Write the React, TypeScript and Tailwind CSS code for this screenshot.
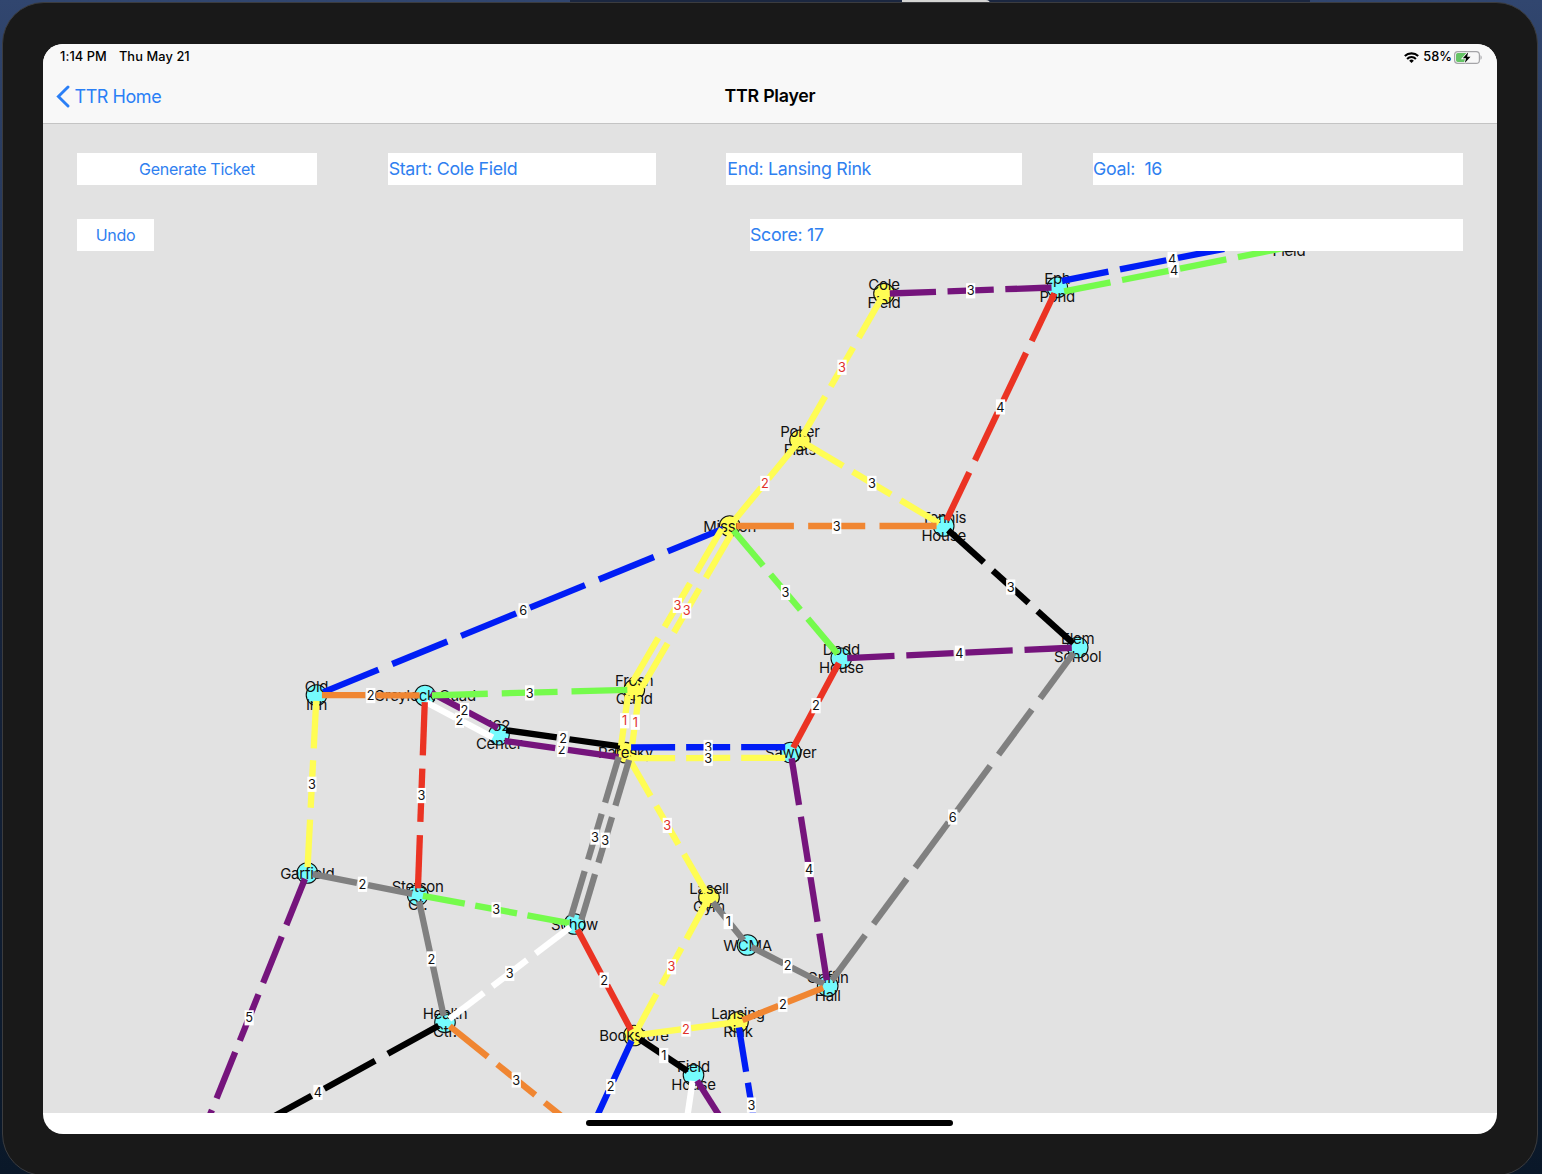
import React from "react";

type Stop = { x: number; y: number; label: string[]; visited?: boolean };

const STOPS: Record<string, Stop> = {
  weston: { x: 1289, y: 241.5, label: ["Weston", "Field"] },
  cole: { x: 884, y: 293.7, label: ["Cole", "Field"], visited: true },
  eph: { x: 1057.3, y: 287.3, label: ["Eph", "Pond"] },
  poker: { x: 800, y: 440.3, label: ["Poker", "Flats"], visited: true },
  mission: { x: 729.7, y: 526, label: ["Mission"], visited: true },
  tennis: { x: 943.7, y: 526, label: ["Tennis", "House"] },
  elem: { x: 1077.7, y: 647.5, label: ["Elem", "School"] },
  dodd: { x: 841.3, y: 658.3, label: ["Dodd", "House"] },
  frosh: { x: 634.3, y: 689.7, label: ["Frosh", "Quad"], visited: true },
  oldInn: { x: 316.5, y: 695, label: ["Old", "Inn"] },
  greylock: { x: 425, y: 695.5, label: ["Greylock Quad"] },
  center: { x: 499, y: 734.7, label: ["'62", "Center"] },
  paresky: { x: 625.6, y: 752.7, label: ["Paresky"], visited: true },
  sawyer: { x: 790.7, y: 752.5, label: ["Sawyer"] },
  garfield: { x: 307.3, y: 873, label: ["Garfield"] },
  stetson: { x: 417.7, y: 895, label: ["Stetson", "Ct."] },
  schow: { x: 574.5, y: 924, label: ["Schow"] },
  lasell: { x: 709, y: 897.5, label: ["Lasell", "Gym"], visited: true },
  wcma: { x: 747.5, y: 945, label: ["WCMA"] },
  griffin: { x: 827.7, y: 986, label: ["Griffin", "Hall"] },
  lansing: { x: 738, y: 1022, label: ["Lansing", "Rink"], visited: true },
  bookstore: { x: 634, y: 1035.5, label: ["Bookstore"], visited: true },
  health: { x: 445, y: 1022.3, label: ["Health", "Ctr."] },
  fieldHouse: { x: 693.5, y: 1075, label: ["Field", "House"] },
  southWest: { x: 191, y: 1162, label: [] },
  south: { x: 587.5, y: 1137, label: [] },
  southMid: { x: 676, y: 1193, label: [] },
  southEast: { x: 765, y: 1187.5, label: [] },
};

const C = {
  red: "#eb3323",
  blue: "#001df5",
  green: "#75fb4c",
  yellow: "#fffd54",
  purple: "#75147c",
  orange: "#f08632",
  gray: "#808080",
  black: "#000000",
  white: "#ffffff",
};

const MAP_BOTTOM = 1113;

type Route = [from: string, to: string, n: number, color: keyof typeof C, shift?: number, taken?: boolean];

const ROUTES: Route[] = [
  ["weston", "eph", 4, "blue", 5.4],
  ["weston", "eph", 4, "green", -5.4],
  ["cole", "eph", 3, "purple"],
  ["cole", "poker", 3, "yellow", 0, true],
  ["eph", "tennis", 4, "red"],
  ["poker", "mission", 2, "yellow", 0, true],
  ["poker", "tennis", 3, "yellow"],
  ["mission", "tennis", 3, "orange"],
  ["mission", "oldInn", 6, "blue"],
  ["mission", "frosh", 3, "yellow", 5.4, true],
  ["mission", "frosh", 3, "yellow", -5.4, true],
  ["mission", "dodd", 3, "green"],
  ["tennis", "elem", 3, "black"],
  ["dodd", "elem", 4, "purple"],
  ["dodd", "sawyer", 2, "red"],
  ["elem", "griffin", 6, "gray"],
  ["oldInn", "greylock", 2, "orange"],
  ["oldInn", "garfield", 3, "yellow"],
  ["greylock", "center", 2, "white", 5.4],
  ["greylock", "center", 2, "purple", -5.4],
  ["greylock", "frosh", 3, "green"],
  ["greylock", "stetson", 3, "red"],
  ["center", "paresky", 2, "purple", 5.4],
  ["center", "paresky", 2, "black", -5.4],
  ["frosh", "paresky", 1, "yellow", 5.4, true],
  ["frosh", "paresky", 1, "yellow", -5.4, true],
  ["paresky", "sawyer", 3, "blue", -5.4],
  ["paresky", "sawyer", 3, "yellow", 5.4],
  ["paresky", "lasell", 3, "yellow", 0, true],
  ["paresky", "schow", 3, "gray", 5.4],
  ["paresky", "schow", 3, "gray", -5.4],
  ["garfield", "stetson", 2, "gray"],
  ["garfield", "southWest", 5, "purple"],
  ["stetson", "schow", 3, "green"],
  ["stetson", "health", 2, "gray"],
  ["schow", "health", 3, "white"],
  ["schow", "bookstore", 2, "red"],
  ["lasell", "bookstore", 3, "yellow", 0, true],
  ["lasell", "wcma", 1, "gray"],
  ["wcma", "griffin", 2, "gray"],
  ["sawyer", "griffin", 4, "purple"],
  ["griffin", "lansing", 2, "orange"],
  ["lansing", "bookstore", 2, "yellow", 0, true],
  ["lansing", "southEast", 3, "blue"],
  ["bookstore", "south", 2, "blue"],
  ["bookstore", "fieldHouse", 1, "black"],
  ["fieldHouse", "southMid", 2, "white"],
  ["fieldHouse", "southEast", 2, "purple"],
  ["health", "southWest", 4, "black"],
  ["health", "south", 3, "orange"],
];

function RouteLine({ route }: { route: Route }) {
  const [from, to, n, color, shift = 0, taken] = route;
  const a = STOPS[from];
  const b = STOPS[to];
  const dx = b.x - a.x;
  const dy = b.y - a.y;
  const len = Math.hypot(dx, dy);
  const ox = (-dy / len) * shift;
  const oy = (dx / len) * shift;
  const at = (t: number) => ({ x: a.x + dx * t + ox, y: a.y + dy * t + oy });
  const mid = at(0.5);
  return (
    <g>
      {Array.from({ length: n }, (_, i) => {
        const p = at((i + 0.1) / n);
        const q = at((i + 0.9) / n);
        return <line key={i} x1={p.x} y1={p.y} x2={q.x} y2={q.y} stroke={C[color]} strokeWidth={6.3} />;
      })}
      {mid.y < MAP_BOTTOM && (
        <>
          <rect x={mid.x - 4.6} y={mid.y - 7.3} width={9.2} height={15.2} fill="#fff" />
          <text x={mid.x} y={mid.y + 4.9} textAnchor="middle" fontSize={12.8} fill={taken ? "#e0302a" : "#111"}>
            {n}
          </text>
        </>
      )}
    </g>
  );
}

function StopMark({ stop }: { stop: Stop }) {
  const { x, y, label, visited } = stop;
  return (
    <g>
      <circle cx={x} cy={y} r={10.3} fill={visited ? C.yellow : "#75fbfd"} stroke="#111" strokeWidth={1.1} />
      {label.map((line, i) => (
        <text
          key={line}
          x={x}
          y={y + 5.6 + (label.length === 1 ? 0 : i === 0 ? -9 : 9)}
          textAnchor="middle"
          fontSize={15}
          letterSpacing={-0.25}
          fill="#111"
        >
          {line}
        </text>
      ))}
    </g>
  );
}

function TrackMap() {
  const stops = Object.values(STOPS).filter((s) => s.label.length > 0);
  return (
    <svg
      className="absolute inset-0 h-full w-full font-['Inter',sans-serif]"
      viewBox="43 124 1454 989"
      preserveAspectRatio="none"
    >
      {stops.map((s) => (
        <StopMark key={s.label.join(" ")} stop={s} />
      ))}
      {ROUTES.map((r, i) => (
        <RouteLine key={i} route={r} />
      ))}
    </svg>
  );
}

function StatusBar() {
  return (
    <div className="flex h-[26px] items-center justify-between pr-[15px] pl-[17px] text-[12.8px] font-medium text-black">
      <div className="flex gap-3 tracking-[0.1px]">
        <span>1:14 PM</span>
        <span>Thu May 21</span>
      </div>
      <div className="flex items-center">
        <svg className="mr-1 h-[11px] w-[15px]" viewBox="0 0 15 11" fill="none" stroke="#000" strokeWidth="2.1">
          <path d="M0.8 4.1a9.6 9.6 0 0 1 13.4 0" />
          <path d="M3.1 6.9a6.2 6.2 0 0 1 8.8 0" />
          <path d="M7.5 11 5.2 8.7a3.3 3.3 0 0 1 4.6 0z" fill="#000" stroke="none" />
        </svg>
        <span>58%</span>
        <svg className="ml-[2px] h-[13px] w-7" viewBox="0 0 28 13">
          <rect x="0.6" y="0.6" width="24.8" height="11.8" rx="3.2" fill="none" stroke="#a5a5a8" strokeWidth="1.2" />
          <path d="M3.8 2H13v9H3.8A1.8 1.8 0 0 1 2 9.200V3.800A1.8 1.8 0 0 1 3.800 2z" fill="#65c466" />
          <path d="M26.500 4.200c1.600.6 1.600 4 0 4.600z" fill="#a5a5a8" />
          <path
            d="M14.200 1.300 8.800 7.300h3.300l-1.300 4.600 5.700-6.200h-3.400z"
            fill="#000"
            stroke="#f8f8f8"
            strokeWidth="1.8"
            paintOrder="stroke"
          />
        </svg>
      </div>
    </div>
  );
}

function NavBar() {
  return (
    <div className="relative flex h-[53px] items-center pl-[13px]">
      <button className="flex items-center gap-[3.5px] text-[18px] tracking-[-0.45px] text-[#2a7ff6]">
        <svg className="h-[23px] w-[15px]" viewBox="0 0 15 23" fill="none" stroke="currentColor" strokeWidth="2.9">
          <path d="M12 2 2.4 11.5 12 21" strokeLinecap="round" />
        </svg>
        <span>TTR Home</span>
      </button>
      <h1 className="absolute inset-x-0 text-center text-[17.8px] font-semibold tracking-[-0.25px] text-black">
        TTR Player
      </h1>
    </div>
  );
}

export default function App() {
  return (
    <div className="relative h-[1174px] w-[1542px] overflow-hidden bg-linear-to-b from-[#31466f] via-[#17243d] to-[#0a1829] pt-[2px] pl-[2px] font-['Inter',sans-serif]">
      <div className="absolute top-0 left-[570px] h-1 w-[740px] bg-[#1b2740]" />
      <div className="absolute top-0 left-[902px] h-1 w-[88px] rounded-tr bg-[#d5d5d3]" />
      <div className="relative h-[1174px] w-[1536px] rounded-[42px] border border-[#3b3c3f] bg-[#191919] px-10 pt-[41px]">
        <div className="flex h-[1090px] w-[1454px] flex-col overflow-hidden rounded-[20px] bg-white">
          <header className="h-20 shrink-0 border-b border-[#c4c4c4] bg-[#f8f8f8]">
            <StatusBar />
            <NavBar />
          </header>
          <main className="relative h-[989px] shrink-0 overflow-hidden bg-[#e2e2e2]">
            <TrackMap />
            <div className="relative flex flex-col gap-[34px] px-[34px] pt-[29px] text-[17.8px] tracking-[-0.3px] text-[#2f80f0]">
              <div className="flex h-8 justify-between">
                <button className="w-60 bg-white text-[16px]">Generate Ticket</button>
                <div className="flex w-[268px] items-center bg-white pl-px">Start: Cole Field</div>
                <div className="flex w-[296px] items-center bg-white pl-px">End: Lansing Rink</div>
                <div className="flex w-[370px] items-center bg-white whitespace-pre">Goal:  16</div>
              </div>
              <div className="flex h-8 justify-between">
                <button className="w-[77px] bg-white text-[16px]">Undo</button>
                <div className="flex w-[713px] items-center bg-white">Score: 17</div>
              </div>
            </div>
          </main>
          <footer className="flex flex-1 justify-center pt-[7px] pr-px">
            <div className="h-[6px] w-[367px] rounded-full bg-black" />
          </footer>
        </div>
      </div>
    </div>
  );
}
